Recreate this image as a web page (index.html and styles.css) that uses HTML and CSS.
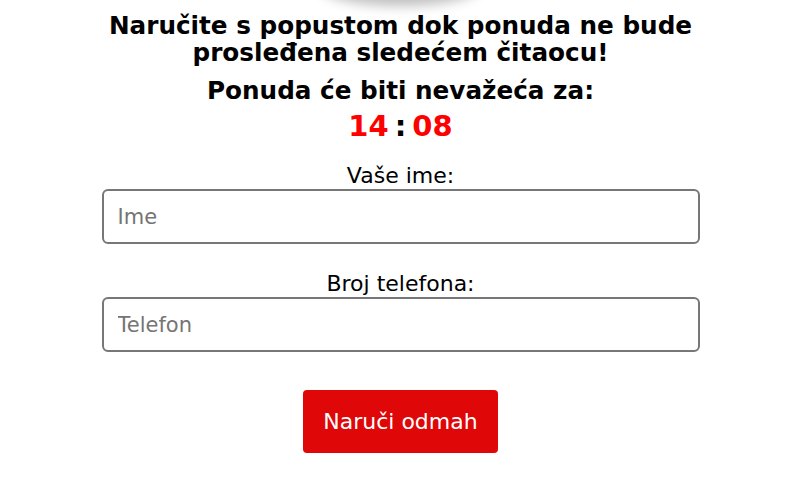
FILE: index.html
```html
<!DOCTYPE html>
<html lang="sr">
<head>
<meta charset="utf-8">
<link rel="stylesheet" href="styles.css">
</head>
<body>
<div class="shadow"></div>
<main class="order">
  <h2 class="title">Naručite s popustom dok ponuda ne bude prosleđena sledećem čitaocu!</h2>
  <h3 class="subtitle">Ponuda će biti nevažeća za:</h3>
  <div class="timer"><span class="num">14</span><span class="colon">:</span><span class="num">08</span></div>
  <form class="form">
    <label class="field">
      <span class="label">Vaše ime:</span>
      <input class="input" type="text" placeholder="Ime">
    </label>
    <label class="field">
      <span class="label">Broj telefona:</span>
      <input class="input" type="tel" placeholder="Telefon">
    </label>
    <button class="btn" type="button">Naruči odmah</button>
  </form>
</main>
</body>
</html>
```
FILE: styles.css
```css
html, body { margin: 0; padding: 0; background: #fff; }
body { font-family: "DejaVu Sans", Verdana, sans-serif; color: #000; overflow: hidden; position: relative; }
.shadow {
  position: absolute; left: 320px; top: -40px; width: 160px; height: 40px;
  border-radius: 50%; box-shadow: 0 6px 12px rgba(0,0,0,0.25);
}
.order { width: 598px; margin: 0 auto; text-align: center; padding-top: 12px; }
.title { font-size: 24.7px; font-weight: bold; line-height: 27px; margin: 0; }
.subtitle { font-size: 24.7px; font-weight: bold; line-height: 27px; margin: 11px 0 0; }
.timer { font-size: 29px; font-weight: bold; line-height: 34px; margin-top: 5px; display: flex; justify-content: center; gap: 6px; }
.num { color: #ff0000; }
.colon { color: #000; }
.form { display: flex; flex-direction: column; align-items: center; margin-top: 21px; }
.field { display: flex; flex-direction: column; align-items: center; width: 100%; margin-bottom: 28px; }
.field:last-of-type { margin-bottom: 0; }
.label { font-size: 22px; line-height: 24px; }
.input {
  box-sizing: border-box; width: 100%; height: 55px; margin-top: 1px;
  border: 2px solid #777; border-radius: 6px; padding: 0 14px;
  font-family: inherit; font-size: 21px; color: #000; outline: none;
}
.input::placeholder { color: #757575; }
.btn {
  margin-top: 38px; width: 195px; height: 63px; border: 0; border-radius: 4px;
  background: #df0707; color: #fff; font-family: inherit; font-size: 22px;
}
```
